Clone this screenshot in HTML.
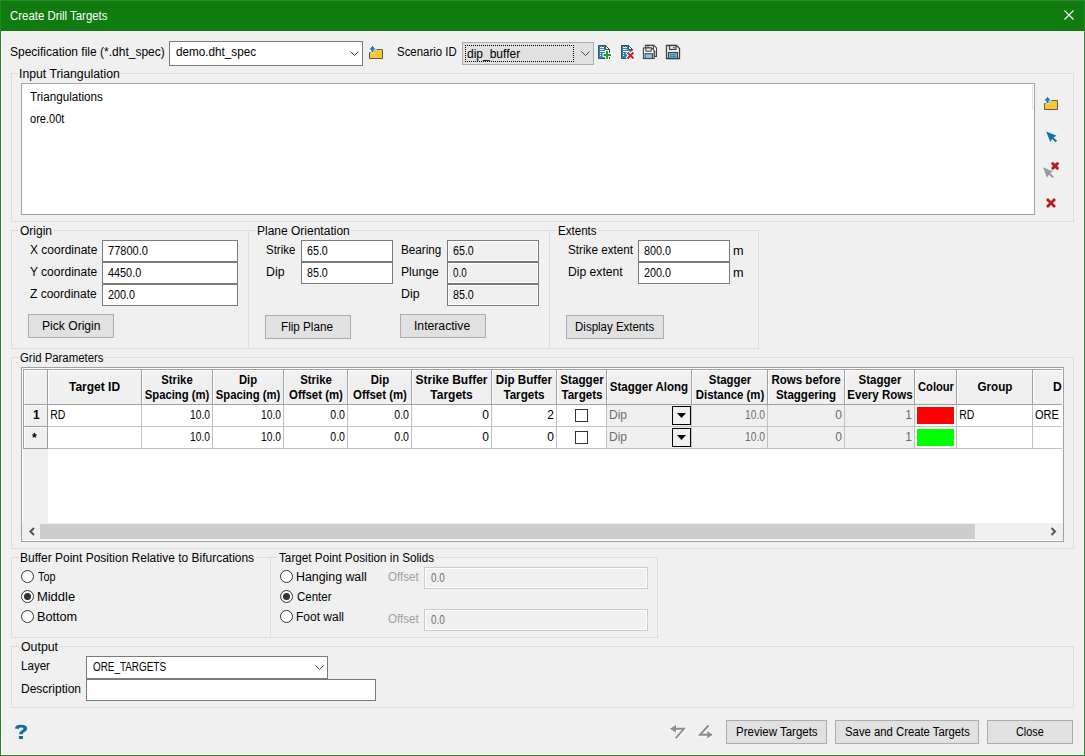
<!DOCTYPE html><html><head><meta charset="utf-8"><style>
html,body{margin:0;padding:0;}
body{width:1085px;height:756px;position:relative;overflow:hidden;background:#f0f0f0;font-family:"Liberation Sans",sans-serif;}
.t{position:absolute;font-size:12px;line-height:14px;white-space:nowrap;color:#000;}
.b{font-weight:bold;}
svg{position:absolute;overflow:visible;}
</style></head><body>
<div style="position:absolute;left:0px;top:0px;width:1085px;height:31px;box-sizing:border-box;background:#107c10;"></div>
<div style="position:absolute;left:0px;top:0px;width:1px;height:756px;box-sizing:border-box;background:#238623;"></div>
<div style="position:absolute;left:1084px;top:0px;width:1px;height:756px;box-sizing:border-box;background:#238623;"></div>
<div style="position:absolute;left:0px;top:755px;width:1085px;height:1px;box-sizing:border-box;background:#238623;"></div>
<div style="position:absolute;left:0px;top:0px;width:1085px;height:1px;box-sizing:border-box;background:#2b8a2b;"></div>
<div style="position:absolute;left:1px;top:31px;width:1083px;height:1px;box-sizing:border-box;background:#fff;"></div>
<div style="position:absolute;left:1px;top:31px;width:1px;height:724px;box-sizing:border-box;background:#fff;"></div>
<div style="position:absolute;left:1083px;top:31px;width:1px;height:724px;box-sizing:border-box;background:#fff;"></div>
<div style="position:absolute;left:1px;top:754px;width:1083px;height:1px;box-sizing:border-box;background:#fff;"></div>
<div class="t" style="left:10px;top:9px;transform:scaleX(0.951);transform-origin:0px 0;color:#fff;">Create Drill Targets</div>
<svg style="left:0;top:0" width="1085" height="31"><path d="M1064.5 10.5L1073.5 19.5M1073.5 10.5L1064.5 19.5" stroke="#fff" stroke-width="1.1"/></svg>
<div class="t" style="left:10px;top:45px;transform:scaleX(1.000);transform-origin:1px 0;">Specification file (*.dht_spec)</div>
<div style="position:absolute;left:169px;top:41px;width:194px;height:25px;box-sizing:border-box;border:1px solid #7a7a7a;background:#fff;"></div>
<div class="t" style="left:176px;top:45px;transform:scaleX(0.976);transform-origin:0px 0;">demo.dht_spec</div>
<div class="t" style="left:397px;top:45px;transform:scaleX(0.951);transform-origin:1px 0;">Scenario ID</div>
<div style="position:absolute;left:462px;top:42px;width:132px;height:23px;box-sizing:border-box;border:1px solid #adadad;background:#e1e1e1;"></div>
<div style="position:absolute;left:465px;top:45px;width:109px;height:17px;box-sizing:border-box;border:1px dotted #000;"></div>
<div class="t" style="left:467px;top:47px;transform:scaleX(1.000);transform-origin:0px 0;">dip_buffer</div>
<svg style="left:0;top:0" width="1085" height="756"><path d="M350.5 51.5L354.5 55.5L358.5 51.5" fill="none" stroke="#444" stroke-width="1"/><path d="M581.5 51.5L585.5 55.5L589.5 51.5" fill="none" stroke="#444" stroke-width="1"/></svg>
<svg style="left:368px;top:45px" width="16" height="16" viewBox="0 0 16 16"><path d="M1.5 7.5H5.5L8 4.5H14.5V13.5H1.5Z" fill="#fdc630" stroke="#5b5b5b" stroke-width="1"/><path d="M4.5 0.3L0.6 4.9H3V7.6H6V4.9H8.4Z" fill="#1b7fb8" stroke="#fff" stroke-width="0.8"/></svg>
<svg style="left:598px;top:45px" width="16" height="16" viewBox="0 0 16 16"><path d="M0.5 0.5H7.5L11.5 4.5V13.5H0.5Z" fill="#1f87c7" stroke="#4a4a4a" stroke-width="1"/><path d="M7.5 0.5V4.5H11.5Z" fill="#fff" stroke="#4a4a4a" stroke-width="1" stroke-linejoin="round"/><path d="M2 2.5H6M2 4.5H6M2 6.5H7M2 8.5H3M2 10.5H3" stroke="#fff" stroke-width="1"/><path d="M9 5V15M4.5 10H14.5" stroke="#fff" stroke-width="4"/><path d="M9 6V14M5.5 10H13" stroke="#2a9a2a" stroke-width="2.2"/></svg>
<svg style="left:621px;top:45px" width="16" height="16" viewBox="0 0 16 16"><path d="M0.5 0.5H7.5L11.5 4.5V13.5H0.5Z" fill="#1f87c7" stroke="#4a4a4a" stroke-width="1"/><path d="M7.5 0.5V4.5H11.5Z" fill="#fff" stroke="#4a4a4a" stroke-width="1" stroke-linejoin="round"/><path d="M2 2.5H6M2 4.5H6M2 6.5H7M2 8.5H3M2 10.5H3" stroke="#fff" stroke-width="1"/><path d="M6 7L13 14M13 7L6 14" stroke="#fff" stroke-width="4"/><path d="M6.5 7.5L12.5 13.5M12.5 7.5L6.5 13.5" stroke="#c8222b" stroke-width="2"/></svg>
<svg style="left:643px;top:45px" width="16" height="16" viewBox="0 0 16 16"><g transform="translate(2,0) scale(0.85)"><path d="M0.5 0.5H10.5L13.5 3.5V13.5H0.5Z" fill="#fff" stroke="#3f3f3f" stroke-width="1.3"/><rect x="3.5" y="0.5" width="6.5" height="4" fill="#e8e8e8" stroke="#3f3f3f" stroke-width="1.2"/><rect x="2.5" y="7.5" width="9" height="6" fill="#7ec3e8" stroke="#3f3f3f" stroke-width="1.2"/></g><g transform="translate(0,2.5) scale(0.82)"><path d="M0.5 0.5H10.5L13.5 3.5V13.5H0.5Z" fill="#fff" stroke="#3f3f3f" stroke-width="1.3"/><rect x="3.5" y="0.5" width="6.5" height="4" fill="#e8e8e8" stroke="#3f3f3f" stroke-width="1.2"/><rect x="2.5" y="7.5" width="9" height="6" fill="#7ec3e8" stroke="#3f3f3f" stroke-width="1.2"/></g></svg>
<svg style="left:666px;top:45px" width="16" height="16" viewBox="0 0 16 16"><path d="M0.5 0.5H10.5L13.5 3.5V13.5H0.5Z" fill="#fff" stroke="#3f3f3f" stroke-width="1.3"/><rect x="3.5" y="0.5" width="6.5" height="4" fill="#e8e8e8" stroke="#3f3f3f" stroke-width="1.2"/><rect x="2.5" y="7.5" width="9" height="6" fill="#7ec3e8" stroke="#3f3f3f" stroke-width="1.2"/><circle cx="8" cy="2.6" r="0.9" fill="#0b6fb0"/><path d="M4 9.8H10M4 11.8H10" stroke="#0b6fb0" stroke-width="1"/></svg>
<div style="position:absolute;left:11px;top:73px;width:1063px;height:149px;box-sizing:border-box;border:1px solid #dcdcdc;"></div>
<div style="position:absolute;left:18px;top:72px;width:103px;height:3px;box-sizing:border-box;background:#f0f0f0;"></div>
<div class="t" style="left:19px;top:67px;transform:scaleX(1.021);transform-origin:1px 0;">Input Triangulation</div>
<div style="position:absolute;left:21px;top:83px;width:1014px;height:132px;box-sizing:border-box;border:1px solid #a2a2aa;background:#fff;"></div>
<div style="position:absolute;left:1032px;top:85px;width:1px;height:25px;box-sizing:border-box;background:#e5e5e5;"></div>
<div class="t" style="left:30px;top:90px;transform:scaleX(0.973);transform-origin:0px 0;">Triangulations</div>
<div class="t" style="left:30px;top:112px;transform:scaleX(0.921);transform-origin:0px 0;">ore.00t</div>
<svg style="left:1043px;top:96px" width="16" height="16" viewBox="0 0 16 16"><path d="M1.5 7.5H5.5L8 4.5H14.5V13.5H1.5Z" fill="#fdc630" stroke="#5b5b5b" stroke-width="1"/><path d="M4.5 0.3L0.6 4.9H3V7.6H6V4.9H8.4Z" fill="#1b7fb8" stroke="#fff" stroke-width="0.8"/></svg>
<svg style="left:1045px;top:130px" width="14" height="14" viewBox="0 0 14 14"><path d="M1.2 1.4L11.6 5.7L8.4 7.5L12.2 10.8L10.6 12.3L7.2 9L5.3 12Z" fill="#0b72ab"/></svg>
<svg style="left:1042px;top:161px" width="18" height="18" viewBox="0 0 18 18"><path d="M1 6.2L11.2 10.4L8.1 12.2L11.9 15.5L10.4 17L6.9 13.7L5 16.8Z" fill="#9a9a9a"/><path d="M10.8 2.6L15.4 7.2M15.4 2.6L10.8 7.2" stroke="#b91c24" stroke-width="3" stroke-linecap="round"/></svg>
<svg style="left:1045px;top:197px" width="13" height="13" viewBox="0 0 13 13"><path d="M2 2L10 10M10 2L2 10" stroke="#b91c24" stroke-width="2.8"/></svg>
<div style="position:absolute;left:11px;top:230px;width:238px;height:119px;box-sizing:border-box;border:1px solid #dcdcdc;"></div>
<div style="position:absolute;left:18px;top:229px;width:36px;height:3px;box-sizing:border-box;background:#f0f0f0;"></div>
<div class="t" style="left:20px;top:224px;transform:scaleX(1.000);transform-origin:0px 0;">Origin</div>
<div class="t" style="left:30px;top:243px;transform:scaleX(1.000);transform-origin:0px 0;">X coordinate</div>
<div class="t" style="left:30px;top:265px;transform:scaleX(1.000);transform-origin:0px 0;">Y coordinate</div>
<div class="t" style="left:30px;top:287px;transform:scaleX(1.000);transform-origin:0px 0;">Z coordinate</div>
<div style="position:absolute;left:102px;top:240px;width:136px;height:22px;box-sizing:border-box;border:1px solid #7a7a7a;background:#fff;"></div>
<div style="position:absolute;left:102px;top:262px;width:136px;height:22px;box-sizing:border-box;border:1px solid #7a7a7a;background:#fff;"></div>
<div style="position:absolute;left:102px;top:284px;width:136px;height:22px;box-sizing:border-box;border:1px solid #7a7a7a;background:#fff;"></div>
<div class="t" style="left:108px;top:244px;transform:scaleX(0.919);transform-origin:0px 0;">77800.0</div>
<div class="t" style="left:108px;top:266px;transform:scaleX(0.905);transform-origin:0px 0;">4450.0</div>
<div class="t" style="left:108px;top:288px;transform:scaleX(0.900);transform-origin:0px 0;">200.0</div>
<div style="position:absolute;left:28px;top:314px;width:86px;height:24px;box-sizing:border-box;border:1px solid #adadad;background:#e1e1e1;"></div>
<div class="t" style="left:42px;top:319px;transform:scaleX(1.009);transform-origin:1px 0;">Pick Origin</div>
<div style="position:absolute;left:248px;top:230px;width:302px;height:119px;box-sizing:border-box;border:1px solid #dcdcdc;"></div>
<div style="position:absolute;left:256px;top:229px;width:95px;height:3px;box-sizing:border-box;background:#f0f0f0;"></div>
<div class="t" style="left:257px;top:224px;transform:scaleX(1.000);transform-origin:1px 0;">Plane Orientation</div>
<div class="t" style="left:266px;top:243px;transform:scaleX(0.953);transform-origin:1px 0;">Strike</div>
<div class="t" style="left:266px;top:265px;transform:scaleX(1.029);transform-origin:1px 0;">Dip</div>
<div style="position:absolute;left:301px;top:240px;width:92px;height:22px;box-sizing:border-box;border:1px solid #7a7a7a;background:#fff;"></div>
<div style="position:absolute;left:301px;top:262px;width:92px;height:22px;box-sizing:border-box;border:1px solid #7a7a7a;background:#fff;"></div>
<div class="t" style="left:307px;top:244px;transform:scaleX(0.891);transform-origin:0px 0;">65.0</div>
<div class="t" style="left:307px;top:266px;transform:scaleX(0.891);transform-origin:0px 0;">85.0</div>
<div class="t" style="left:401px;top:243px;transform:scaleX(0.975);transform-origin:1px 0;">Bearing</div>
<div class="t" style="left:401px;top:265px;transform:scaleX(1.014);transform-origin:1px 0;">Plunge</div>
<div class="t" style="left:401px;top:287px;transform:scaleX(1.029);transform-origin:1px 0;">Dip</div>
<div style="position:absolute;left:447px;top:240px;width:92px;height:22px;box-sizing:border-box;border:1px solid #7a7a7a;background:#f0f0f0;box-shadow:inset 0 0 0 1px #fff;"></div>
<div style="position:absolute;left:447px;top:262px;width:92px;height:22px;box-sizing:border-box;border:1px solid #7a7a7a;background:#f0f0f0;box-shadow:inset 0 0 0 1px #fff;"></div>
<div style="position:absolute;left:447px;top:284px;width:92px;height:22px;box-sizing:border-box;border:1px solid #7a7a7a;background:#f0f0f0;box-shadow:inset 0 0 0 1px #fff;"></div>
<div class="t" style="left:453px;top:244px;transform:scaleX(0.891);transform-origin:0px 0;">65.0</div>
<div class="t" style="left:453px;top:266px;transform:scaleX(0.824);transform-origin:0px 0;">0.0</div>
<div class="t" style="left:453px;top:288px;transform:scaleX(0.891);transform-origin:0px 0;">85.0</div>
<div style="position:absolute;left:265px;top:315px;width:86px;height:24px;box-sizing:border-box;border:1px solid #adadad;background:#e1e1e1;"></div>
<div class="t" style="left:281px;top:320px;transform:scaleX(0.973);transform-origin:1px 0;">Flip Plane</div>
<div style="position:absolute;left:400px;top:314px;width:86px;height:24px;box-sizing:border-box;border:1px solid #adadad;background:#e1e1e1;"></div>
<div class="t" style="left:414px;top:319px;transform:scaleX(1.015);transform-origin:1px 0;">Interactive</div>
<div style="position:absolute;left:549px;top:230px;width:210px;height:119px;box-sizing:border-box;border:1px solid #dcdcdc;"></div>
<div style="position:absolute;left:557px;top:229px;width:41.5px;height:3px;box-sizing:border-box;background:#f0f0f0;"></div>
<div class="t" style="left:558px;top:224px;transform:scaleX(0.962);transform-origin:1px 0;">Extents</div>
<div class="t" style="left:568px;top:243px;transform:scaleX(0.974);transform-origin:1px 0;">Strike extent</div>
<div class="t" style="left:568px;top:265px;transform:scaleX(1.013);transform-origin:1px 0;">Dip extent</div>
<div style="position:absolute;left:638px;top:240px;width:92px;height:22px;box-sizing:border-box;border:1px solid #7a7a7a;background:#fff;"></div>
<div style="position:absolute;left:638px;top:262px;width:92px;height:22px;box-sizing:border-box;border:1px solid #7a7a7a;background:#fff;"></div>
<div class="t" style="left:644px;top:244px;transform:scaleX(0.900);transform-origin:0px 0;">800.0</div>
<div class="t" style="left:644px;top:266px;transform:scaleX(0.900);transform-origin:0px 0;">200.0</div>
<div class="t" style="left:733px;top:244px;transform:scaleX(1.056);transform-origin:1px 0;">m</div>
<div class="t" style="left:733px;top:266px;transform:scaleX(1.056);transform-origin:1px 0;">m</div>
<div style="position:absolute;left:566px;top:315px;width:98px;height:24px;box-sizing:border-box;border:1px solid #adadad;background:#e1e1e1;"></div>
<div class="t" style="left:575px;top:320px;transform:scaleX(0.957);transform-origin:1px 0;">Display Extents</div>
<div style="position:absolute;left:11px;top:357px;width:1063px;height:192px;box-sizing:border-box;border:1px solid #dcdcdc;"></div>
<div style="position:absolute;left:18px;top:356px;width:87.4px;height:3px;box-sizing:border-box;background:#f0f0f0;"></div>
<div class="t" style="left:20px;top:351px;transform:scaleX(0.948);transform-origin:0px 0;">Grid Parameters</div>
<div style="position:absolute;left:21px;top:367px;width:1043px;height:175px;box-sizing:border-box;border:1px solid #a0a0a8;background:#fff;"></div>
<div style="position:absolute;left:23px;top:369px;width:1039px;height:36px;box-sizing:border-box;background:#f0f0f0;"></div>
<div style="position:absolute;left:23px;top:405px;width:25px;height:118px;box-sizing:border-box;background:#f0f0f0;"></div>
<div style="position:absolute;left:607px;top:405px;width:84px;height:43px;box-sizing:border-box;background:#f0f0f0;"></div>
<div style="position:absolute;left:692px;top:405px;width:222px;height:43px;box-sizing:border-box;background:#f0f0f0;"></div>
<svg style="left:0;top:0" width="1085" height="756"><path d="M24.5 370V404M24 370.5H47M48.5 370V404M48 370.5H141M142.5 370V404M142 370.5H212M213.5 370V404M213 370.5H283M284.5 370V404M284 370.5H347M348.5 370V404M348 370.5H411M412.5 370V404M412 370.5H491M492.5 370V404M492 370.5H556M557.5 370V404M557 370.5H606M607.5 370V404M607 370.5H691M692.5 370V404M692 370.5H767M768.5 370V404M768 370.5H844M845.5 370V404M845 370.5H914M915.5 370V404M915 370.5H956M957.5 370V404M957 370.5H1032M1033.5 370V404M1033 370.5H1062M24.5 405V426M24.5 427V448M24 405.5H47M24 427.5H47" stroke="#fff" stroke-width="1" fill="none"/><path d="M141.5 405V449M212.5 405V449M283.5 405V449M347.5 405V449M411.5 405V449M491.5 405V449M556.5 405V449M606.5 405V449M691.5 405V449M767.5 405V449M844.5 405V449M914.5 405V449M956.5 405V449M1032.5 405V449M48 426.5H1062M48 448.5H1062" stroke="#c2c2c2" stroke-width="1" fill="none"/><path d="M23.5 369V404M47.5 369V404M141.5 369V404M212.5 369V404M283.5 369V404M347.5 369V404M411.5 369V404M491.5 369V404M556.5 369V404M606.5 369V404M691.5 369V404M767.5 369V404M844.5 369V404M914.5 369V404M956.5 369V404M1032.5 369V404M23.5 404V449M47.5 404V449M23 369.5H1062M23 404.5H1062M23 426.5H48M23 448.5H48" stroke="#a0a0a0" stroke-width="1" fill="none"/></svg>
<div class="t b" style="left:-55.5px;top:380px;width:300px;text-align:center;transform:scaleX(1.000);">Target ID</div>
<div class="t b" style="left:27.0px;top:373px;width:300px;text-align:center;transform:scaleX(0.940);">Strike</div>
<div class="t b" style="left:27.0px;top:388px;width:300px;text-align:center;transform:scaleX(0.940);">Spacing (m)</div>
<div class="t b" style="left:98.0px;top:373px;width:300px;text-align:center;transform:scaleX(0.940);">Dip</div>
<div class="t b" style="left:98.0px;top:388px;width:300px;text-align:center;transform:scaleX(0.940);">Spacing (m)</div>
<div class="t b" style="left:165.5px;top:373px;width:300px;text-align:center;transform:scaleX(0.950);">Strike</div>
<div class="t b" style="left:165.5px;top:388px;width:300px;text-align:center;transform:scaleX(0.950);">Offset (m)</div>
<div class="t b" style="left:229.5px;top:373px;width:300px;text-align:center;transform:scaleX(0.950);">Dip</div>
<div class="t b" style="left:229.5px;top:388px;width:300px;text-align:center;transform:scaleX(0.950);">Offset (m)</div>
<div class="t b" style="left:301.5px;top:373px;width:300px;text-align:center;transform:scaleX(1.000);">Strike Buffer</div>
<div class="t b" style="left:301.5px;top:388px;width:300px;text-align:center;transform:scaleX(1.000);">Targets</div>
<div class="t b" style="left:374.0px;top:373px;width:300px;text-align:center;transform:scaleX(0.970);">Dip Buffer</div>
<div class="t b" style="left:374.0px;top:388px;width:300px;text-align:center;transform:scaleX(0.970);">Targets</div>
<div class="t b" style="left:431.5px;top:373px;width:300px;text-align:center;transform:scaleX(0.970);">Stagger</div>
<div class="t b" style="left:431.5px;top:388px;width:300px;text-align:center;transform:scaleX(0.970);">Targets</div>
<div class="t b" style="left:499.0px;top:380px;width:300px;text-align:center;transform:scaleX(0.960);">Stagger Along</div>
<div class="t b" style="left:579.5px;top:373px;width:300px;text-align:center;transform:scaleX(0.950);">Stagger</div>
<div class="t b" style="left:579.5px;top:388px;width:300px;text-align:center;transform:scaleX(0.950);">Distance (m)</div>
<div class="t b" style="left:656.0px;top:373px;width:300px;text-align:center;transform:scaleX(0.960);">Rows before</div>
<div class="t b" style="left:656.0px;top:388px;width:300px;text-align:center;transform:scaleX(0.960);">Staggering</div>
<div class="t b" style="left:729.5px;top:373px;width:300px;text-align:center;transform:scaleX(0.960);">Stagger</div>
<div class="t b" style="left:729.5px;top:388px;width:300px;text-align:center;transform:scaleX(0.960);">Every Rows</div>
<div class="t b" style="left:785.5px;top:380px;width:300px;text-align:center;transform:scaleX(0.930);">Colour</div>
<div class="t b" style="left:844.5px;top:380px;width:300px;text-align:center;transform:scaleX(0.970);">Group</div>
<div style="position:absolute;left:1034px;top:370px;width:28px;height:34px;overflow:hidden;"><div class="t b" style="left:19px;top:10px;">D</div></div>
<div class="t b" style="left:33px;top:408px;">1</div>
<div class="t b" style="left:32px;top:431px;">*</div>
<div class="t" style="left:110px;top:408px;width:100px;text-align:right;color:#000;transform:scaleX(0.854);transform-origin:100% 0;">10.0</div>
<div class="t" style="left:181px;top:408px;width:100px;text-align:right;color:#000;transform:scaleX(0.854);transform-origin:100% 0;">10.0</div>
<div class="t" style="left:245px;top:408px;width:100px;text-align:right;color:#000;transform:scaleX(0.882);transform-origin:100% 0;">0.0</div>
<div class="t" style="left:309px;top:408px;width:100px;text-align:right;color:#000;transform:scaleX(0.882);transform-origin:100% 0;">0.0</div>
<div class="t" style="left:389px;top:408px;width:100px;text-align:right;color:#000;">0</div>
<div class="t" style="left:454px;top:408px;width:100px;text-align:right;color:#000;">2</div>
<div class="t" style="left:665px;top:408px;width:100px;text-align:right;color:#6d6d6d;transform:scaleX(0.854);transform-origin:100% 0;">10.0</div>
<div class="t" style="left:742px;top:408px;width:100px;text-align:right;color:#6d6d6d;">0</div>
<div class="t" style="left:812px;top:408px;width:100px;text-align:right;color:#6d6d6d;">1</div>
<div class="t" style="left:609px;top:408px;transform:scaleX(1.000);transform-origin:1px 0;color:#6d6d6d;">Dip</div>
<div class="t" style="left:110px;top:430px;width:100px;text-align:right;color:#000;transform:scaleX(0.854);transform-origin:100% 0;">10.0</div>
<div class="t" style="left:181px;top:430px;width:100px;text-align:right;color:#000;transform:scaleX(0.854);transform-origin:100% 0;">10.0</div>
<div class="t" style="left:245px;top:430px;width:100px;text-align:right;color:#000;transform:scaleX(0.882);transform-origin:100% 0;">0.0</div>
<div class="t" style="left:309px;top:430px;width:100px;text-align:right;color:#000;transform:scaleX(0.882);transform-origin:100% 0;">0.0</div>
<div class="t" style="left:389px;top:430px;width:100px;text-align:right;color:#000;">0</div>
<div class="t" style="left:454px;top:430px;width:100px;text-align:right;color:#000;">0</div>
<div class="t" style="left:665px;top:430px;width:100px;text-align:right;color:#6d6d6d;transform:scaleX(0.854);transform-origin:100% 0;">10.0</div>
<div class="t" style="left:742px;top:430px;width:100px;text-align:right;color:#6d6d6d;">0</div>
<div class="t" style="left:812px;top:430px;width:100px;text-align:right;color:#6d6d6d;">1</div>
<div class="t" style="left:609px;top:430px;transform:scaleX(1.000);transform-origin:1px 0;color:#6d6d6d;">Dip</div>
<div class="t" style="left:50px;top:408px;transform:scaleX(0.875);transform-origin:1px 0;">RD</div>
<div class="t" style="left:959px;top:408px;transform:scaleX(0.875);transform-origin:1px 0;">RD</div>
<div style="position:absolute;left:1033px;top:405px;width:29px;height:21px;overflow:hidden;"><div class="t" style="left:2px;top:3px;transform:scaleX(0.92);transform-origin:0 0;">ORE</div></div>
<div style="position:absolute;left:575px;top:409px;width:13px;height:13px;box-sizing:border-box;border:1px solid #333;background:#fff;"></div>
<div style="position:absolute;left:575px;top:431px;width:13px;height:13px;box-sizing:border-box;border:1px solid #333;background:#fff;"></div>
<div style="position:absolute;left:672px;top:406px;width:19px;height:19px;box-sizing:border-box;border:1px solid #000;background:#f0f0f0;"></div>
<svg style="left:672px;top:406px" width="19" height="19"><path d="M5 7H14L9.5 12Z" fill="#000"/></svg>
<div style="position:absolute;left:672px;top:428px;width:19px;height:19px;box-sizing:border-box;border:1px solid #000;background:#f0f0f0;"></div>
<svg style="left:672px;top:428px" width="19" height="19"><path d="M5 7H14L9.5 12Z" fill="#000"/></svg>
<div style="position:absolute;left:917px;top:407px;width:37px;height:17px;box-sizing:border-box;background:#ff0000;"></div>
<div style="position:absolute;left:917px;top:429px;width:37px;height:17px;box-sizing:border-box;background:#00ff00;"></div>
<div style="position:absolute;left:22px;top:523px;width:1041px;height:17px;box-sizing:border-box;background:#f0f0f0;"></div>
<div style="position:absolute;left:40px;top:524px;width:935px;height:15px;box-sizing:border-box;background:#cdcdcd;"></div>
<svg style="left:0;top:0" width="1085" height="756"><path d="M34 528L30.5 531.5L34 535" fill="none" stroke="#555" stroke-width="2"/><path d="M1051.5 528L1055 531.5L1051.5 535" fill="none" stroke="#555" stroke-width="2"/></svg>
<div style="position:absolute;left:11px;top:557px;width:260px;height:81px;box-sizing:border-box;border:1px solid #dcdcdc;"></div>
<div style="position:absolute;left:19px;top:556px;width:236.6px;height:3px;box-sizing:border-box;background:#f0f0f0;"></div>
<div class="t" style="left:20px;top:551px;transform:scaleX(0.998);transform-origin:1px 0;">Buffer Point Position Relative to Bifurcations</div>
<svg style="left:21px;top:570px" width="13" height="13"><circle cx="6.5" cy="6.5" r="6" fill="#fff" stroke="#333" stroke-width="1"/></svg>
<svg style="left:21px;top:590px" width="13" height="13"><circle cx="6.5" cy="6.5" r="6" fill="#fff" stroke="#333" stroke-width="1"/><circle cx="6.5" cy="6.5" r="3.5" fill="#333"/></svg>
<svg style="left:21px;top:610px" width="13" height="13"><circle cx="6.5" cy="6.5" r="6" fill="#fff" stroke="#333" stroke-width="1"/></svg>
<div class="t" style="left:38px;top:570px;transform:scaleX(0.905);transform-origin:0px 0;">Top</div>
<div class="t" style="left:37px;top:590px;transform:scaleX(1.082);transform-origin:1px 0;">Middle</div>
<div class="t" style="left:37px;top:610px;transform:scaleX(1.059);transform-origin:1px 0;">Bottom</div>
<div style="position:absolute;left:270px;top:557px;width:388px;height:81px;box-sizing:border-box;border:1px solid #dcdcdc;"></div>
<div style="position:absolute;left:277px;top:556px;width:159.39999999999998px;height:3px;box-sizing:border-box;background:#f0f0f0;"></div>
<div class="t" style="left:279px;top:551px;transform:scaleX(0.977);transform-origin:0px 0;">Target Point Position in Solids</div>
<svg style="left:280px;top:570px" width="13" height="13"><circle cx="6.5" cy="6.5" r="6" fill="#fff" stroke="#333" stroke-width="1"/></svg>
<svg style="left:280px;top:590px" width="13" height="13"><circle cx="6.5" cy="6.5" r="6" fill="#fff" stroke="#333" stroke-width="1"/><circle cx="6.5" cy="6.5" r="3.5" fill="#333"/></svg>
<svg style="left:280px;top:610px" width="13" height="13"><circle cx="6.5" cy="6.5" r="6" fill="#fff" stroke="#333" stroke-width="1"/></svg>
<div class="t" style="left:296px;top:570px;transform:scaleX(1.030);transform-origin:1px 0;">Hanging wall</div>
<div class="t" style="left:297px;top:590px;transform:scaleX(0.958);transform-origin:0px 0;">Center</div>
<div class="t" style="left:296px;top:610px;transform:scaleX(1.000);transform-origin:1px 0;">Foot wall</div>
<div class="t" style="left:388px;top:570px;transform:scaleX(0.969);transform-origin:0px 0;color:#a0a0a0;">Offset</div>
<div class="t" style="left:388px;top:612px;transform:scaleX(0.969);transform-origin:0px 0;color:#a0a0a0;">Offset</div>
<div style="position:absolute;left:424px;top:567px;width:224px;height:22px;box-sizing:border-box;border:1px solid #cccccc;background:#f0f0f0;box-shadow:inset 0 0 0 1px #fff;"></div>
<div style="position:absolute;left:424px;top:609px;width:224px;height:22px;box-sizing:border-box;border:1px solid #cccccc;background:#f0f0f0;box-shadow:inset 0 0 0 1px #fff;"></div>
<div class="t" style="left:431px;top:571px;transform:scaleX(0.824);transform-origin:0px 0;color:#6d6d6d;">0.0</div>
<div class="t" style="left:431px;top:613px;transform:scaleX(0.824);transform-origin:0px 0;color:#6d6d6d;">0.0</div>
<div style="position:absolute;left:11px;top:646px;width:1063px;height:62px;box-sizing:border-box;border:1px solid #dcdcdc;"></div>
<div style="position:absolute;left:19px;top:645px;width:41px;height:3px;box-sizing:border-box;background:#f0f0f0;"></div>
<div class="t" style="left:21px;top:640px;transform:scaleX(1.028);transform-origin:0px 0;">Output</div>
<div class="t" style="left:21px;top:659px;transform:scaleX(0.962);transform-origin:1px 0;">Layer</div>
<div class="t" style="left:21px;top:682px;transform:scaleX(1.000);transform-origin:1px 0;">Description</div>
<div style="position:absolute;left:86px;top:656px;width:242px;height:23px;box-sizing:border-box;border:1px solid #7a7a7a;background:#fff;"></div>
<div class="t" style="left:93px;top:660px;transform:scaleX(0.825);transform-origin:0px 0;">ORE_TARGETS</div>
<svg style="left:0;top:0" width="1085" height="756"><path d="M315.5 665.5L319.5 669.5L323.5 665.5" fill="none" stroke="#444" stroke-width="1"/></svg>
<div style="position:absolute;left:86px;top:679px;width:290px;height:22px;box-sizing:border-box;border:1px solid #7a7a7a;background:#fff;"></div>
<svg style="left:13px;top:723px" width="17" height="18" viewBox="0 0 17 18"><path d="M1.8 5.4C2.3 2.6 4.6 1.7 8 1.7C11.8 1.7 14.2 3.1 14.2 5.5C14.2 8 11.4 8.8 10.3 9.8C9.9 10.2 9.9 10.6 9.9 11.2H6.1C6.1 9.8 6.7 8.9 7.9 8C9.2 7.1 10.4 6.7 10.4 5.8C10.4 4.9 9.5 4.4 8.1 4.4C6.7 4.4 5.9 5 5.6 6.1Z" fill="#0e6fa8"/><rect x="5.9" y="13" width="4.1" height="3" fill="#0e6fa8"/></svg>
<svg style="left:668px;top:723px" width="48" height="18"><g transform="translate(0.8,0.8)"><g fill="none" stroke="#fff" stroke-width="1.9"><path d="M7 5.8H16L7.8 15.2"/><path d="M40.5 2.5L32 11.8H40"/></g><g fill="#fff"><path d="M2 5.8L8 2V9.8Z"/><path d="M44.8 11.8L39.3 8.2V15.6Z"/></g></g><g fill="none" stroke="#8c8c8c" stroke-width="1.9"><path d="M7 5.8H16L7.8 15.2"/><path d="M40.5 2.5L32 11.8H40"/></g><g fill="#8c8c8c"><path d="M2 5.8L8 2V9.8Z"/><path d="M44.8 11.8L39.3 8.2V15.6Z"/></g></svg>
<div style="position:absolute;left:726px;top:720px;width:101px;height:24px;box-sizing:border-box;border:1px solid #adadad;background:#e1e1e1;"></div>
<div class="t" style="left:736px;top:725px;transform:scaleX(0.958);transform-origin:1px 0;">Preview Targets</div>
<div style="position:absolute;left:835px;top:720px;width:144px;height:24px;box-sizing:border-box;border:1px solid #adadad;background:#e1e1e1;"></div>
<div class="t" style="left:845px;top:725px;transform:scaleX(0.942);transform-origin:1px 0;">Save and Create Targets</div>
<div style="position:absolute;left:987px;top:720px;width:86px;height:24px;box-sizing:border-box;border:1px solid #adadad;background:#e1e1e1;"></div>
<div class="t" style="left:1016px;top:725px;transform:scaleX(0.903);transform-origin:0px 0;">Close</div>
</body></html>
